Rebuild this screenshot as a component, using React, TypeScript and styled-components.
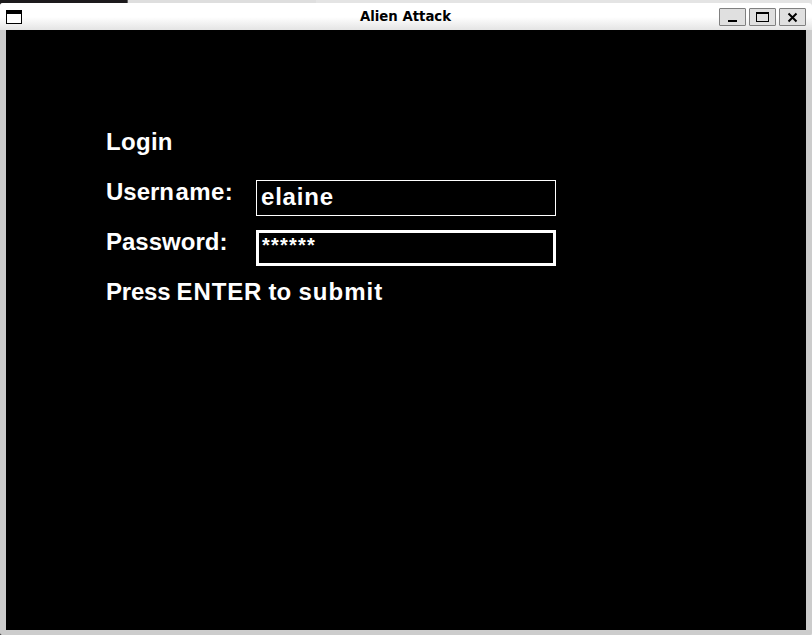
import React from "react";
import styled, { createGlobalStyle } from "styled-components";

const GlobalStyle = createGlobalStyle`
  * { box-sizing: border-box; }
  body { margin: 0; background: #ccc; overflow: hidden; }
`;

const Desktop = styled.div`
  width: 812px;
  height: 635px;
  padding-top: 3px;
  background: linear-gradient(90deg, #1c1a1c 127px, #606060 127px, #606060 128px, #dedede 128px, #dedede 316px, #e4e4e4 316px);
`;

const Window = styled.div`
  display: flex;
  flex-direction: column;
  height: 632px;
  background: #ccc;
  border-radius: 3px 3px 2px 2px;
  overflow: hidden;
`;

const TitleBar = styled.header`
  display: grid;
  grid-template-columns: 93px 1fr 93px;
  height: 27px;
  padding: 0 6px;
  background: linear-gradient(#fff 0, #fff 14px, #e4e4e4 27px);
`;

const Title = styled.h1`
  margin: 0;
  padding-right: 1px;
  text-align: center;
  font: bold 13.3px/28px "DejaVu Sans", sans-serif;
  color: #000;
`;

const AppIcon = styled.svg`
  margin-top: 7px;
`;

const Controls = styled.div`
  display: flex;
  justify-content: flex-end;
  gap: 3px;
  padding-top: 5px;
`;

const ControlButton = styled.button`
  width: 27px;
  height: 18px;
  padding: 0;
  border: 1px solid #808080;
  border-radius: 1px;
  background: #e0e0e0;
  svg { display: block; }
`;

const Screen = styled.main`
  display: flex;
  flex-direction: column;
  width: 800px;
  height: 600px;
  margin-left: 6px;
  padding: 100px 0 0 100px;
  background: #000;
  color: #fff;
  font: bold 24px/24px "Liberation Sans", Arial, sans-serif;
`;

const Row = styled.div`
  display: flex;
  height: 50px;
`;

const Label = styled.div<{ $spacing?: number; $width?: number }>`
  width: ${(p) => (p.$width ? `${p.$width}px` : "auto")};
  letter-spacing: ${(p) => p.$spacing ?? 0}px;
  white-space: pre;
`;

const Run = styled.span<{ $spacing?: number; $width: number }>`
  display: inline-block;
  width: ${(p) => p.$width}px;
  letter-spacing: ${(p) => p.$spacing ?? 0}px;
  white-space: pre;
`;

const Field = styled.div`
  width: 300px;
  height: 36px;
  padding: 4px;
  border: 1px solid #fff;
  letter-spacing: 0.8px;
`;

const PasswordField = styled(Field)`
  padding: 2px 3px;
  border-width: 3px;
  font-size: 20px;
  line-height: 20px;
  letter-spacing: 1.22px;
`;

export default function App() {
  return (
    <>
      <GlobalStyle />
      <Desktop>
        <Window>
          <TitleBar>
            <AppIcon width="16" height="14" shapeRendering="crispEdges">
              <path d="M0 0h16v14H0z" />
              <path d="M1 4h14v9H1z" fill="#fff" />
            </AppIcon>
            <Title>Alien Attack</Title>
            <Controls>
              <ControlButton aria-label="Minimize">
                <svg width="25" height="16" shapeRendering="crispEdges">
                  <path d="M8 11h9v2H8z" />
                </svg>
              </ControlButton>
              <ControlButton aria-label="Maximize">
                <svg width="25" height="16" shapeRendering="crispEdges">
                  <path fillRule="evenodd" d="M6 3h13v10H6zM7 5v7h11V5z" />
                </svg>
              </ControlButton>
              <ControlButton aria-label="Close">
                <svg width="25" height="16">
                  <path d="M8.5 4.5l8 8M16.5 4.5l-8 8" stroke="#000" strokeWidth="2" />
                </svg>
              </ControlButton>
            </Controls>
          </TitleBar>
          <Screen>
            <Row><Label $spacing={0.3}>Login</Label></Row>
            <Row>
              <Label $width={150}>
                <Run $width={69.5}>Usern</Run>
                <Run $width={60} $spacing={0.4}>ame:</Run>
              </Label>
              <Field>elaine</Field>
            </Row>
            <Row>
              <Label $width={150}>Password:</Label>
              <PasswordField>******</PasswordField>
            </Row>
            <Row>
              <Label>
                <Run $width={70.5} $spacing={-0.2}>{"Press "}</Run>
                <Run $width={92} $spacing={0.9}>{"ENTER "}</Run>
                <Run $width={30}>{"to "}</Run>
                <Run $width={90} $spacing={1}>submit</Run>
              </Label>
            </Row>
          </Screen>
        </Window>
      </Desktop>
    </>
  );
}
